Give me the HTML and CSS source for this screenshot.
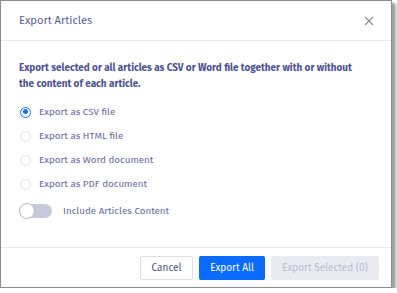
FILE: index.html
```html
<!DOCTYPE html>
<html>
<head>
<meta charset="utf-8">
<link rel="stylesheet" href="styles.css">
</head>
<body>
<div class="dialog">
  <div class="header">
    <span class="title">Export Articles</span>
    <svg class="close" width="10" height="10" viewBox="0 0 10 10"><path d="M1 1L9 9M9 1L1 9" stroke="#8a8a96" stroke-width="1.1" fill="none"/></svg>
  </div>
  <div class="body">
    <p class="desc">Export selected or all articles as CSV or Word file together with or without the content of each article.</p>
    <div class="options">
      <label class="opt"><span class="radio checked"></span>Export as CSV file</label>
      <label class="opt"><span class="radio"></span>Export as HTML file</label>
      <label class="opt"><span class="radio"></span>Export as Word document</label>
      <label class="opt"><span class="radio"></span>Export as PDF document</label>
    </div>
    <div class="toggle-row">
      <span class="toggle"><span class="knob"></span></span>
      <span class="toggle-label">Include Articles Content</span>
    </div>
  </div>
  <div class="footer">
    <button class="btn cancel">Cancel</button>
    <button class="btn primary">Export All</button>
    <button class="btn disabled">Export Selected (0)</button>
  </div>
</div>
</body>
</html>
```
FILE: styles.css
```css
html, body { margin: 0; padding: 0; background: #fff; }
body { font-family: "Fira Sans", "Open Sans", sans-serif; }
.dialog {
  width: 390px;
  height: 286px;
  border: 1px solid #8c8c8c;
  background: #fff;
  box-shadow: 3px 3px 2px #a0a0a0, 5px 5px 3px #cfcfcf;
  display: flex;
  flex-direction: column;
  box-sizing: content-box;
}
.header {
  height: 39px;
  border-bottom: 1px solid #e9e9ef;
  display: flex;
  align-items: center;
  justify-content: space-between;
  padding: 0 17px 0 18px;
}
.title { font-size: 11.1px; color: #5a5d96; }
.close { display: block; }
.body { flex: 1; padding: 19px 18px 0 18px; }
.desc {
  margin: 0;
  padding-right: 12px;
  font-size: 9.95px;
  font-weight: 700;
  line-height: 16px;
  color: #4d5190;
}
.options { margin-top: 8px; display: flex; flex-direction: column; }
.opt {
  height: 24px;
  display: flex;
  align-items: center;
  font-size: 9.8px;
  color: #676a9c;
}
.radio {
  width: 11px; height: 11px;
  border: 1px solid #e3e3ea;
  border-radius: 50%;
  margin: 0 8px 0 1px;
  box-sizing: border-box;
  position: relative;
}
.radio.checked { border: 1.5px solid #1a6ff0; }
.radio.checked::after {
  content: ""; position: absolute; left: 1.5px; top: 1.5px;
  width: 5px; height: 5px; border-radius: 50%; background: #1a6ff0;
}
.toggle-row { margin-top: 8px; display: flex; align-items: center; }
.toggle {
  width: 33px; height: 14px; border-radius: 7px;
  background: #c9c9dc; position: relative;
}
.knob {
  position: absolute; left: 0; top: -1px;
  width: 14px; height: 14px; border-radius: 50%;
  background: #fff; border: 1px solid #b9b9cc;
}
.toggle-label { margin-left: 11px; font-size: 9.8px; color: #676a9c; }
.footer {
  height: 38px;
  border-top: 1px solid #e9e9ef;
  display: flex;
  justify-content: flex-end;
  align-items: center;
  gap: 6px;
  padding: 1px 12px 0 0;
  box-sizing: content-box;
}
.btn {
  height: 24px;
  font-family: inherit;
  font-size: 10px;
  border-radius: 2px;
  padding: 0;
  border: 1px solid transparent;
}
.cancel { width: 53px; background: #fff; border-color: #dedee6; color: #4d5080; }
.primary { width: 66px; background: #0a6cff; color: #fff; }
.disabled { width: 108px; background: #e9ebf1; color: #b9bccc; }
```
